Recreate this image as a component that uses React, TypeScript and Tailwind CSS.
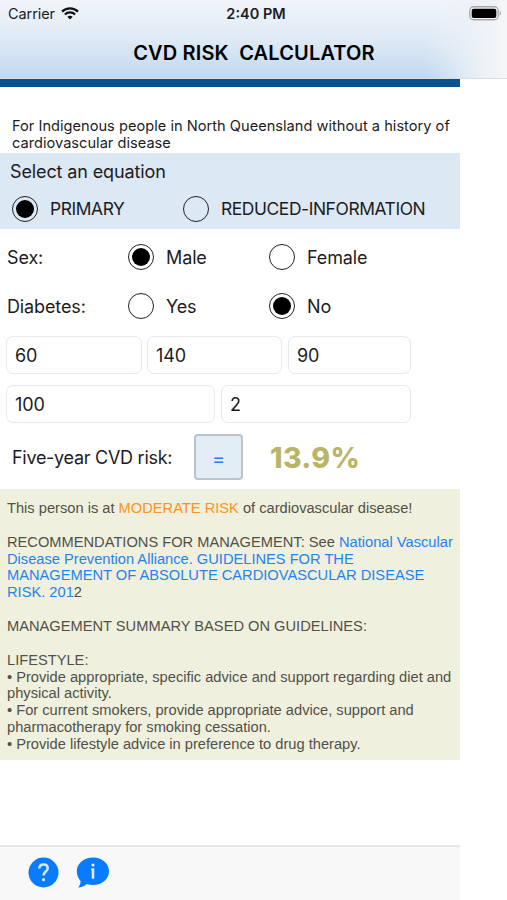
import clsx from "clsx";

const Radio = ({ checked }: { checked?: boolean }) => (
  <span className="flex h-[26px] w-[26px] shrink-0 items-center justify-center rounded-full border-[1.5px] border-[#222]">
    {checked && <span className="h-[18px] w-[18px] rounded-full bg-black" />}
  </span>
);

type OptionProps = { label: string; checked?: boolean; className?: string };

const Option = ({ label, checked, className }: OptionProps) => (
  <div className={clsx("flex items-center gap-3 whitespace-nowrap", className)}>
    <Radio checked={checked} />
    <span>{label}</span>
  </div>
);

const Field = ({ value, className }: { value: string; className: string }) => (
  <div
    className={clsx(
      "flex h-[38px] items-center rounded-[7px] border border-[#e9e9e9] bg-white pl-2 text-[18px]",
      className,
    )}
  >
    {value}
  </div>
);

const WifiIcon = () => (
  <svg width="18" height="13" viewBox="0 0 18 13" fill="none" stroke="#111" strokeWidth="2.2">
    <path d="M1 4.6C5.4.2 12.6.2 17 4.6" />
    <path d="M3.9 7.5C6.7 4.7 11.3 4.7 14.1 7.5" />
    <path d="M9 12.6 6.3 9.7C7.8 8.3 10.2 8.3 11.7 9.7Z" fill="#111" stroke="none" />
  </svg>
);

const BatteryIcon = () => (
  <svg width="33" height="15" viewBox="0 0 33 15">
    <rect x="0.75" y="0.75" width="28.5" height="13" rx="4" fill="#f4f4f4" stroke="#a5a7a9" strokeWidth="1.3" />
    <rect x="2.7" y="2.7" width="24.6" height="9.2" rx="2" fill="#000" />
    <path d="M30.7 5v4.6c1.8-.7 1.8-3.9 0-4.6Z" fill="#a5a7a9" />
  </svg>
);

const HelpIcon = () => (
  <svg width="31" height="31" viewBox="0 0 31 31">
    <circle cx="15.5" cy="15.5" r="15" fill="#087bff" />
    <path
      d="M11.3 11.5C11.4 8.9 13 7.5 15.5 7.5c2.5 0 4.2 1.4 4.2 3.7 0 3.4-4.1 3.3-4.1 7.3"
      fill="none"
      stroke="#d8eaff"
      strokeWidth="2.5"
    />
    <circle cx="15.5" cy="22.7" r="1.6" fill="#d8eaff" />
  </svg>
);

const InfoIcon = () => (
  <svg width="34" height="31" viewBox="0 0 34 31">
    <path
      d="M17 .5C26 .5 33 6.5 33 14.2S26 28 17 28c-2.3 0-4.4-.4-6.3-1.1C8.5 29.3 5.4 30.500 2 30.400c1.700-1.600 2.600-3.900 2.500-6.500C2.200 21.300.8 18 .8 14.200.8 6.500 8 .5 17 .5Z"
      fill="#087bff"
    />
    <circle cx="17" cy="8" r="1.6" fill="#e3f0ff" />
    <path d="M15.3 12.500h1.700v9.200" fill="none" stroke="#e3f0ff" strokeWidth="2.500" />
  </svg>
);

const advice = [
  ["Provide appropriate, specific advice and support regarding diet and", "physical activity."],
  ["For current smokers, provide appropriate advice, support and", "pharmacotherapy for smoking cessation."],
  ["Provide lifestyle advice in preference to drug therapy."],
];

const App = () => {
  return (
    <div className="flex h-[900px] w-[507px] flex-col overflow-hidden bg-white font-['Inter',sans-serif] text-[18px] tracking-[-0.12px] text-[#1c1c1e]">
      <header className="relative h-[79px] shrink-0 border-b border-[#d9dde1] bg-linear-to-b from-[#f2f5fa] via-[#dce9f5] via-55% to-[#c1d8f0]">
        <div className="absolute inset-y-0 right-0 w-[80px] bg-linear-to-r from-transparent via-[#edf2f6] via-70% to-[#f5f6f7]" />
        <div className="relative flex h-[27px] items-center justify-between pr-[5px] pl-2 text-[14.5px] tracking-normal">
          <div className="flex w-[90px] items-center gap-[6px] tracking-[-0.08px]">
            <span>Carrier</span>
            <WifiIcon />
          </div>
          <span className="pl-[2px] font-semibold">2:40 PM</span>
          <div className="flex w-[90px] justify-end">
            <BatteryIcon />
          </div>
        </div>
        <h1 className="relative mt-[11px] pl-px text-center text-[20px] leading-[30px] font-semibold tracking-[0.15px] whitespace-pre text-black">
          CVD RISK  CALCULATOR
        </h1>
      </header>

      <main className="w-[460px]">
        <div className="h-2 bg-[#07528f]" />
        <p className="h-[66px] pt-[31px] pl-3 text-[14.6px] leading-[17px] tracking-[0.02px] whitespace-nowrap">
          For Indigenous people in North Queensland without a history of
          <br />
          cardiovascular disease
        </p>

        <section className="h-[76px] bg-[#dce8f4] pt-[5px]">
          <h2 className="pl-[10px] leading-[28px]">Select an equation</h2>
          <div className="mt-[9px] flex pl-3 text-[17.4px] leading-[27px] tracking-[-0.4px]">
            <Option label="PRIMARY" checked className="w-[171px]" />
            <Option label="REDUCED-INFORMATION" />
          </div>
        </section>

        <div className="flex h-[56px] items-center pl-[7px]">
          <span className="w-[121px]">Sex:</span>
          <Option label="Male" checked className="w-[141px]" />
          <Option label="Female" />
        </div>
        <div className="flex h-[42px] items-center pl-[7px]">
          <span className="w-[121px]">Diabetes:</span>
          <Option label="Yes" className="w-[141px]" />
          <Option label="No" checked />
        </div>

        <div className="mt-[9px] flex gap-[5px] pl-[6px]">
          <Field value="60" className="w-[136px]" />
          <Field value="140" className="w-[135px]" />
          <Field value="90" className="ml-px w-[123px]" />
        </div>
        <div className="mt-[11px] flex gap-[5px] pl-[6px]">
          <Field value="100" className="w-[209px]" />
          <Field value="2" className="ml-px w-[190px]" />
        </div>

        <div className="mt-[11px] flex h-[46px] items-center pl-3">
          <span className="w-[182px] tracking-[-0.28px]">Five-year CVD risk:</span>
          <button className="h-[46px] w-[49px] rounded-[4px] border-2 border-[#bcc3ca] bg-[#e2edf6] pt-[3px] text-[20px] text-[#187fef]">
            =
          </button>
          <span className="mt-[2px] ml-[27px] text-[28.5px] font-extrabold tracking-[0.3px] text-[#b9b568]">13.9%</span>
        </div>

        <section className="mt-[9px] h-[271px] bg-[#f0f0df] pt-[11px] pl-[7px] font-['Liberation_Sans',sans-serif] text-[14.67px] leading-[16.86px] tracking-normal whitespace-nowrap text-[#505048]">
          <p>
            This person is at <span className="text-[#ff9320]">MODERATE RISK</span> of cardiovascular disease!
          </p>
          <p className="mt-[16.86px]">
            RECOMMENDATIONS FOR MANAGEMENT: See{" "}
            <a className="text-[#2384ee]">
              National Vascular
              <br />
              Disease Prevention Alliance. GUIDELINES FOR THE
              <br />
              MANAGEMENT OF ABSOLUTE CARDIOVASCULAR DISEASE
              <br />
              RISK. 201
            </a>
            2
          </p>
          <p className="mt-[16.86px]">MANAGEMENT SUMMARY BASED ON GUIDELINES:</p>
          <p className="mt-[16.86px]">LIFESTYLE:</p>
          {advice.map((lines) => (
            <div key={lines[0]}>
              {lines.map((line, index) => (
                <p key={line}>
                  {index === 0 && "• "}
                  {line}
                </p>
              ))}
            </div>
          ))}
        </section>
      </main>

      <footer className="mt-auto flex h-[55px] w-[460px] shrink-0 gap-[17px] border-t-2 border-[#e7e7e7] bg-[#f8f8f8] pt-[10px] pl-7">
        <HelpIcon />
        <InfoIcon />
      </footer>
    </div>
  );
};

export default App;
